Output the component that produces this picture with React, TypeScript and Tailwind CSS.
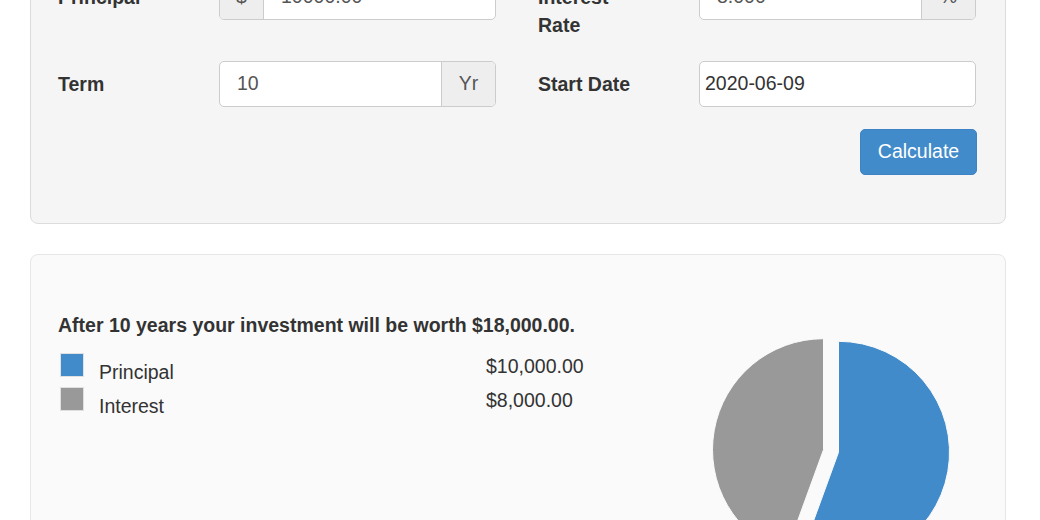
import React from "react"

const font = { fontFamily: '"Liberation Sans", Arial, sans-serif' }

const Field = ({ label, value, prefix, suffix }: { label: string, value: string, prefix?: string, suffix?: string }) => {
    return (
        <div className="flex items-start">
            <label className="w-[161px] shrink-0 pr-[50px] pt-[9px] text-[19.5px] leading-[28px] font-bold text-[#333]">{label}</label>
            <div className="flex flex-1 h-[46px] rounded-[5px] border border-[#ccc] bg-white overflow-hidden">
                {prefix && (
                    <span className="w-[44px] shrink-0 flex items-center justify-center bg-[#eee] border-r border-[#ccc] text-[19.5px] text-[#555]">{prefix}</span>
                )}
                <div className="flex-1 flex items-center pl-[17px] text-[19.5px] text-[#555]">{value}</div>
                {suffix && (
                    <span className="w-[54px] shrink-0 flex items-center justify-center bg-[#eee] border-l border-[#ccc] text-[19.5px] text-[#555]">{suffix}</span>
                )}
            </div>
        </div>
    )
}

const Pie = () => {
    // 10000 / 18000 -> 200 degrees for principal, exploded slices
    return (
        <svg width="262" height="262" viewBox="0 0 262 262" className="shrink-0">
            <path d="M137.5 131.3 L137.5 20.3 A111 111 0 1 1 99.54 235.6 Z" fill="#428bca" stroke="#fafafa" strokeWidth="1" />
            <path d="M122.5 128.7 L84.54 233 A111 111 0 0 1 122.5 17.7 Z" fill="#999999" stroke="#fafafa" strokeWidth="1" />
        </svg>
    )
}

export default function App() {
    return (
        <div className="w-[1040px] h-[520px] overflow-hidden bg-white" style={font}>
            <div className="mt-[-60px] ml-[30px] w-[976px]">
                <div className="rounded-[8px] border border-[#dcdcdc] bg-[#f5f5f5] shadow-[inset_0_1px_1px_rgba(0,0,0,0.05)] pt-[33px] pb-[48px] pl-[27px] pr-[29px]">
                    <div className="grid grid-cols-2 gap-x-[42px] gap-y-[22px]">
                        <Field label="Principal" prefix="$" value="10000.00" />
                        <Field label="Interest Rate" suffix="%" value="8.000" />
                        <Field label="Term" suffix="Yr" value="10" />
                        <div className="flex items-start">
                            <label className="w-[161px] shrink-0 pr-[50px] pt-[9px] text-[19.5px] leading-[28px] font-bold text-[#333]">Start Date</label>
                            <div className="flex-1 h-[46px] rounded-[5px] border border-[#ccc] bg-white flex items-center pl-[5px] text-[19.5px] text-[#333]">2020-06-09</div>
                        </div>
                    </div>
                    <div className="flex justify-end mt-[22px] -mr-px">
                        <button className="h-[46px] w-[117px] rounded-[5px] bg-[#428bca] border border-[#3c84c4] text-white text-[19.5px]">Calculate</button>
                    </div>
                </div>

                <div className="mt-[30px] rounded-[8px] border border-[#e6e6e6] bg-[#fafafa] pt-[56px] pl-[27px] pr-[42px] flex h-[400px]">
                    <div className="flex-1">
                        <p className="text-[19.5px] leading-[28px] font-bold text-[#333]">After 10 years your investment will be worth $18,000.00.</p>
                        <div className="mt-[14px] flex">
                            <div className="w-[428px] pl-[2px]">
                                {[
                                    { name: "Principal", color: "bg-[#428bca]" },
                                    { name: "Interest", color: "bg-[#999]" },
                                ].map((item) => (
                                    <div className="flex h-[34px]" key={item.name}>
                                        <span className={`w-[24px] h-[24px] border border-[#e0e0e0] ${item.color}`}></span>
                                        <span className="ml-[15px] mt-[5px] text-[19.5px] leading-[28px] text-[#333]">{item.name}</span>
                                    </div>
                                ))}
                            </div>
                            <div className="-mt-px">
                                <div className="h-[34px] text-[19.5px] leading-[28px] text-[#333]">$10,000.00</div>
                                <div className="h-[34px] text-[19.5px] leading-[28px] text-[#333]">$8,000.00</div>
                            </div>
                        </div>
                    </div>
                    <div className="mt-[10px]">
                        <Pie />
                    </div>
                </div>
            </div>
        </div>
    )
}
